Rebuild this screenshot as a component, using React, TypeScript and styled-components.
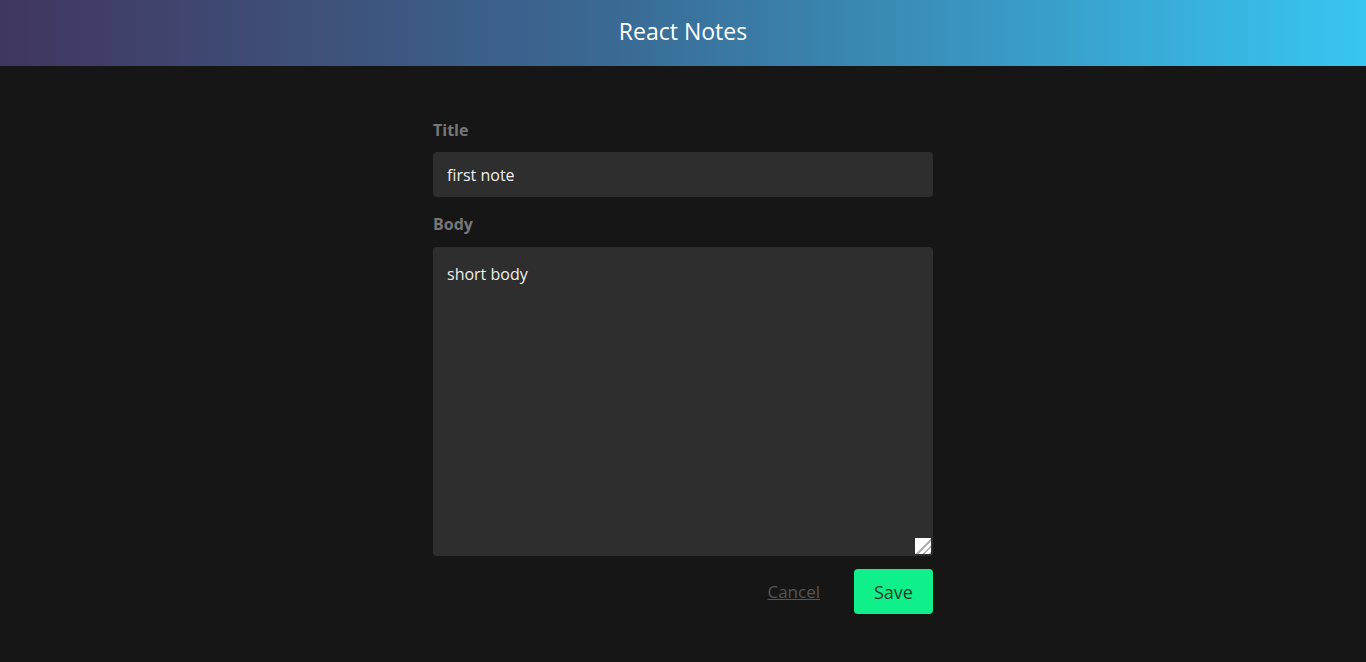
import styled, { createGlobalStyle } from "styled-components";

const GlobalStyle = createGlobalStyle`
  html, body {
    margin: 0;
    padding: 0;
    background: #161616;
    font-family: "Open Sans", "Noto Sans", sans-serif;
  }
  * {
    box-sizing: border-box;
  }
`;

const App = () => {
  return (
    <>
      <GlobalStyle />
      <Header>
        <HeaderTitle>React Notes</HeaderTitle>
      </Header>
      <Main>
        <Form onSubmit={(e) => e.preventDefault()}>
          <Label htmlFor="title">Title</Label>
          <Input id="title" defaultValue="first note" />
          <Label htmlFor="body">Body</Label>
          <BodyField>
            <TextArea id="body" defaultValue="short body" />
          </BodyField>
          <Actions>
            <CancelLink href="#">Cancel</CancelLink>
            <SaveButton type="submit">Save</SaveButton>
          </Actions>
        </Form>
      </Main>
    </>
  );
};

export default App;

const Header = styled.header`
  height: 66px;
  display: flex;
  align-items: center;
  justify-content: center;
  padding-bottom: 4px;
  background: linear-gradient(90deg, #41365f 0%, #3a6a94 45%, #38c6f2 100%);
`;

const HeaderTitle = styled.h1`
  margin: 0;
  color: #fff;
  font-size: 23px;
  font-weight: 400;
`;

const Main = styled.main`
  display: flex;
  justify-content: center;
  padding-top: 52px;
`;

const Form = styled.form`
  width: 500px;
  display: flex;
  flex-direction: column;
`;

const Label = styled.label`
  color: #777;
  font-size: 16px;
  font-weight: 700;
  line-height: 24px;
  margin-bottom: 10px;
`;

const Input = styled.input`
  height: 45px;
  border: none;
  border-radius: 4px;
  background: #2e2e2e;
  color: #eee;
  font-family: inherit;
  font-size: 16px;
  padding: 0 14px;
  margin-bottom: 15px;
  outline: none;
`;

const BodyField = styled.div`
  position: relative;
  display: flex;
  margin-top: 1px;

  /* resize grip drawn over the textarea corner */
  &::after {
    content: "";
    position: absolute;
    right: 2px;
    bottom: 2px;
    width: 16px;
    height: 16px;
    pointer-events: none;
    background-color: #fff;
    background-image: linear-gradient(135deg, #fff 50%, transparent 50%),
      repeating-linear-gradient(135deg, #fff 0 3px, #b0b0b0 3px 4.5px);
  }
`;

const TextArea = styled.textarea`
  flex: 1;
  height: 309px;
  border: none;
  border-radius: 4px;
  background: #2e2e2e;
  color: #eee;
  font-family: inherit;
  font-size: 16px;
  line-height: 24px;
  padding: 15px 14px 14px;
  resize: none;
  outline: none;
`;

const Actions = styled.div`
  display: flex;
  justify-content: flex-end;
  align-items: center;
  gap: 34px;
  margin-top: 13px;
`;

const CancelLink = styled.a`
  color: #555;
  font-size: 17px;
  text-decoration: underline;
`;

const SaveButton = styled.button`
  width: 79px;
  height: 45px;
  border: none;
  border-radius: 4px;
  background: #0ff08a;
  color: #1d3a2b;
  font-family: inherit;
  font-size: 18px;
  cursor: pointer;
`;
